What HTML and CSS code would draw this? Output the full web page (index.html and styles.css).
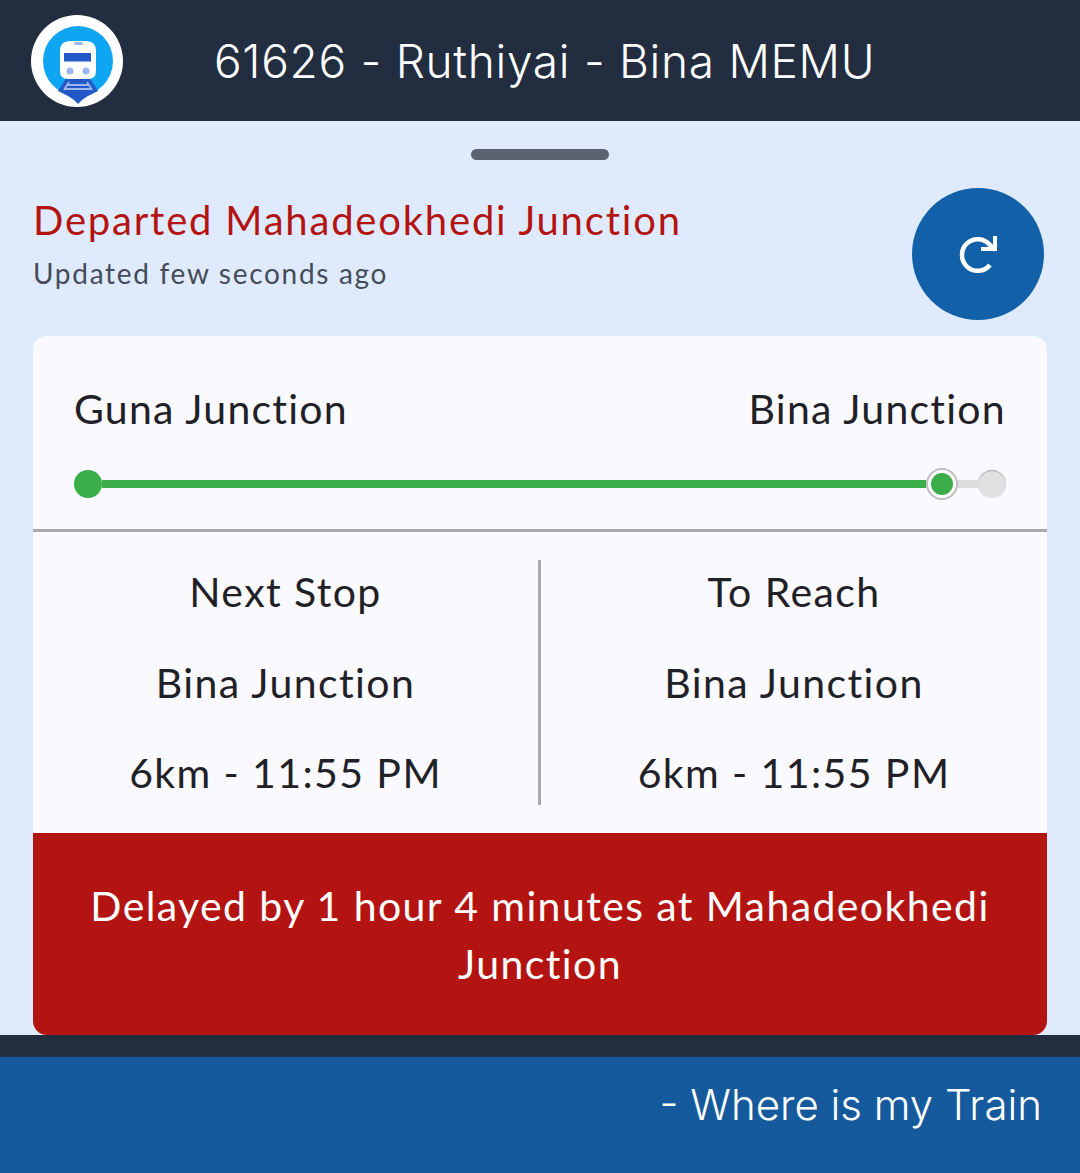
FILE: index.html
```html
<!DOCTYPE html>
<html lang="en">
<head>
    <meta charset="UTF-8">
    <meta name="viewport" content="width=device-width, initial-scale=1.0">
    <title>Where is my Train</title>
    <link rel="stylesheet" href="styles.css">
</head>
<body>

    <header class="topbar">
        <svg class="logo" viewBox="0 0 92 92" width="92" height="92">
            <circle cx="46" cy="46" r="46" fill="#fff"/>
            <circle cx="47" cy="46" r="35" fill="#0ea5f3"/>
            <path d="M36 62h22l9 14-10 5-6 4-4 4-4-4-6-4-10-5z" fill="#2259c7"/>
            <path d="M38 67l-5 8M56 67l5 8M36 70h22M34 74h26" stroke="#9db8f0" stroke-width="1.800" fill="none"/>
            <path d="M29 36q0-10 10-10h16q10 0 10 10v20q0 8-8 8H37q-8 0-8-8z" fill="#fff"/>
            <rect x="33" y="38" width="27" height="8.500" fill="#2259c7"/>
            <circle cx="39" cy="56" r="3.500" fill="#9db8f0"/>
            <circle cx="55" cy="56" r="3.500" fill="#9db8f0"/>
            <rect x="43" y="27" width="9" height="3" rx="1.500" fill="#9db8f0"/>
        </svg>
        <h1 class="train-name">61626 - Ruthiyai - Bina MEMU</h1>
    </header>

    <main class="sheet">
        <div class="handle"></div>

        <div class="status-row">
            <div class="status-text">
                <h2 class="status">Departed Mahadeokhedi Junction</h2>
                <p class="updated">Updated few seconds ago</p>
            </div>
            <button class="refresh" aria-label="Refresh">
                <svg viewBox="0 0 38 38" width="38" height="38">
                    <path d="M31 30A15.800 15.800 0 1 1 31 10L36 15" fill="none" stroke="#fff" stroke-width="4.500"/>
                    <path d="M38 1v15H22v-4h12V1z" fill="#fff"/>
                </svg>
            </button>
        </div>

        <section class="card">
            <div class="route">
                <div class="route-names">
                    <span>Guna Junction</span>
                    <span>Bina Junction</span>
                </div>
                <div class="track">
                    <span class="dot dot-start"></span>
                    <span class="line line-done"></span>
                    <span class="dot-ring"><span class="dot-now"></span></span>
                    <span class="line line-left"></span>
                    <span class="dot dot-end"></span>
                </div>
            </div>

            <div class="stops">
                <div class="stop">
                    <p>Next Stop</p>
                    <p>Bina Junction</p>
                    <p>6km - 11:55 PM</p>
                </div>
                <div class="stops-divider"></div>
                <div class="stop">
                    <p>To Reach</p>
                    <p>Bina Junction</p>
                    <p>6km - 11:55 PM</p>
                </div>
            </div>

            <div class="delay">Delayed by 1 hour 4 minutes at Mahadeokhedi Junction</div>
        </section>
    </main>

    <footer class="footer">
        <div class="footer-band">- Where is my Train</div>
    </footer>

</body>
</html>
```

FILE: styles.css
```css
html, body {
    margin: 0;
    padding: 0;
}
body {
    font-family: Lato, sans-serif;
    background: #dfebfd;
    color: #1f2126;
    width: 1080px;
    height: 1173px;
    overflow: hidden;
}
p, h1, h2 {
    margin: 0;
    font-weight: 400;
}
.topbar {
    height: 121px;
    background: #222d3f;
    display: flex;
    align-items: center;
    padding-left: 31px;
    box-sizing: border-box;
}
.logo {
    flex: none;
}
.train-name {
    margin-left: 91px;
    font-family: Inter, sans-serif;
    font-weight: 300;
    font-size: 46px;
    letter-spacing: 0.7px;
    color: #fff;
    white-space: nowrap;
}
.sheet {
    height: 914px;
    padding: 28px 33px 0;
    box-sizing: border-box;
}
.handle {
    width: 138px;
    height: 11px;
    margin: 0 auto;
    border-radius: 6px;
    background: #5b6370;
}
.status-row {
    display: flex;
    justify-content: space-between;
    margin-top: 28px;
    padding-right: 3px;
}
.status-text {
    padding-top: 6px;
}
.status {
    font-size: 40px;
    line-height: 52px;
    letter-spacing: 1.8px;
    color: #b31412;
}
.updated {
    font-size: 28px;
    line-height: 36px;
    margin-top: 9px;
    letter-spacing: 1.7px;
    color: #454c59;
}
.refresh {
    width: 132px;
    height: 132px;
    border: none;
    border-radius: 50%;
    padding: 0;
    background: #1261a8;
    display: flex;
    align-items: center;
    justify-content: center;
}
.card {
    margin-top: 16px;
    height: 699px;
    background: #f9f9fe;
    border-radius: 14px;
    overflow: hidden;
    display: flex;
    flex-direction: column;
}
.route {
    height: 196px;
    padding: 46px 41px 0;
    box-sizing: border-box;
    border-bottom: 3px solid #a9a9ab;
}
.route-names {
    display: flex;
    justify-content: space-between;
    font-size: 41px;
    line-height: 54px;
    letter-spacing: 1.25px;
}
.track {
    display: flex;
    align-items: center;
    margin-top: 32px;
    height: 32px;
}
.dot {
    flex: none;
    width: 28px;
    height: 28px;
    border-radius: 50%;
}
.dot-start {
    background: #3cae49;
}
.line {
    height: 8px;
}
.line-done {
    flex: 1;
    background: #3cae49;
}
.line-left {
    width: 20px;
    background: #dcdcdc;
}
.dot-ring {
    flex: none;
    width: 32px;
    height: 32px;
    box-sizing: border-box;
    border: 2px solid #bdbdbd;
    border-radius: 50%;
    background: #fff;
    display: flex;
    align-items: center;
    justify-content: center;
}
.dot-now {
    width: 22px;
    height: 22px;
    border-radius: 50%;
    background: #3cae49;
}
.dot-end {
    background: #e0e0e0;
    box-shadow: inset 0 1px 1px #aaa;
}
.stops {
    flex: 1;
    display: grid;
    grid-template-columns: 505px 3px 1fr;
    padding-top: 28px;
    box-sizing: border-box;
}
.stops-divider {
    height: 245px;
    background: #a9a9ab;
}
.stop {
    height: 245px;
    padding-top: 2px;
    box-sizing: border-box;
    text-align: center;
    font-size: 41px;
    letter-spacing: 1.4px;
    display: flex;
    flex-direction: column;
    gap: 30.5px;
}
.stop p {
    line-height: 60px;
}
.delay {
    height: 202px;
    padding: 44px 30px 0;
    box-sizing: border-box;
    background: #b31412;
    color: #fff;
    font-size: 41px;
    letter-spacing: 1.4px;
    line-height: 58px;
    text-align: center;
}
.footer {
    height: 138px;
    background: #222d3f;
    padding-top: 22px;
    box-sizing: border-box;
}
.footer-band {
    height: 116px;
    background: #155a9c;
    color: #fff;
    font-family: Inter, sans-serif;
    font-weight: 300;
    font-size: 42px;
    line-height: 96px;
    text-align: right;
    padding-right: 38px;
}
```
